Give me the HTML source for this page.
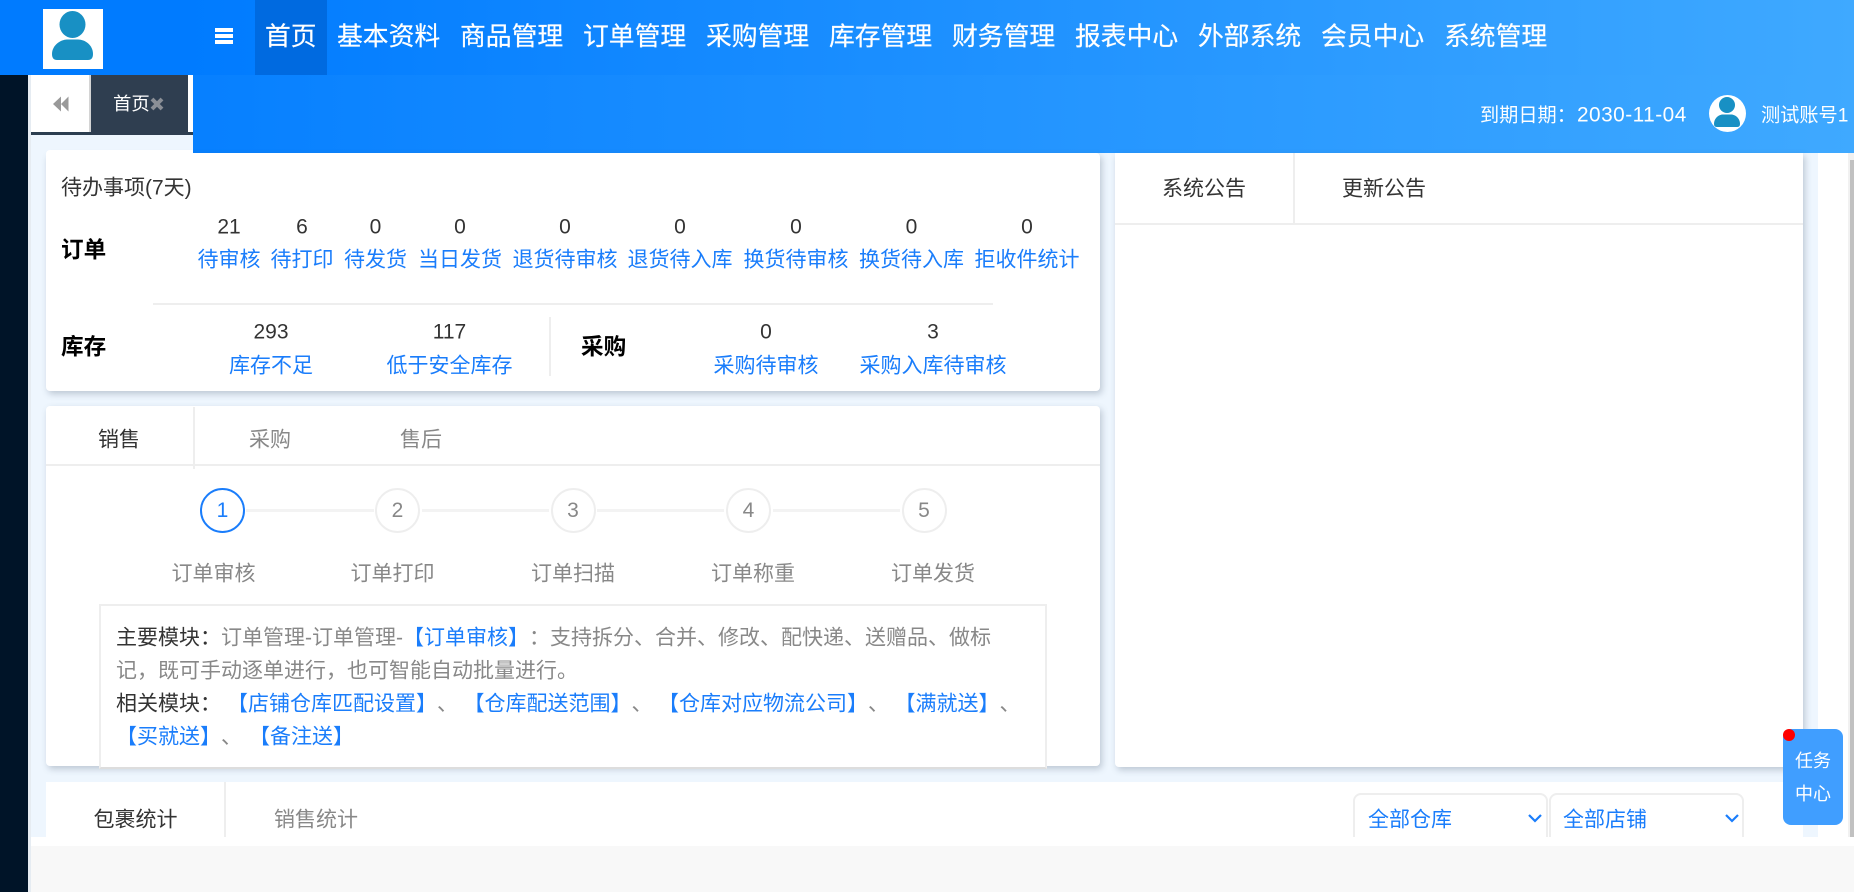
<!DOCTYPE html>
<html lang="zh">
<head>
<meta charset="utf-8">
<title>首页</title>
<style>
html,body{margin:0;padding:0;width:1854px;height:892px;overflow:hidden;background:#fff;}
body{position:relative;font-family:"Liberation Sans","Noto Sans CJK SC",sans-serif;font-size:21px;color:#333;text-spacing-trim:space-all;}
div,span,svg{box-sizing:border-box;}
.a{position:absolute;}
.t{position:absolute;transform:translate(-50%,-50%);white-space:nowrap;line-height:1;}
.l{position:absolute;transform:translateY(-50%);white-space:nowrap;line-height:1;}
.blue{color:#1a7dfb;}
.gray{color:#888;}
.b{font-weight:700;font-size:22.6px;color:#000;}
.card{position:absolute;background:#fff;border-radius:4px;box-shadow:2px 3px 7px rgba(60,80,100,.28);}
.m{position:absolute;top:37.500px;transform:translateY(-50%);font-size:25.800px;line-height:1;color:#fff;white-space:nowrap;-webkit-text-stroke:.2px #fff;}
.c{position:absolute;width:45px;height:45px;border-radius:50%;border:2px solid #eee;top:488px;text-align:center;line-height:42px;color:#888;background:#fff;}
.ln{position:absolute;height:3px;top:509px;background:#f3f3f3;}
.s{position:absolute;top:793px;height:44px;width:195px;background:#fff;border:2px solid #eee;border-bottom:0;border-radius:8px 8px 0 0;}
.ln2{position:absolute;left:116px;transform:translateY(-50%);white-space:nowrap;line-height:1;color:#888;}
</style>
</head>
<body>
<!-- sidebar + backgrounds -->
<div class="a" style="left:0;top:75px;width:28px;height:817px;background:#001428;"></div>
<div class="a" style="left:28px;top:75px;width:3px;height:817px;background:#e6ecf2;"></div>
<div class="a" style="left:31px;top:135px;width:1787px;height:702px;background:#eef6fe;"></div>
<div class="a" style="left:31px;top:846px;width:1823px;height:46px;background:#f8f8f8;"></div>
<!-- right strip -->
<div class="a" style="left:1818px;top:153px;width:36px;height:693px;background:#fff;"></div>
<div class="a" style="left:1848px;top:153px;width:6px;height:684px;background:#f1f1f1;"></div>
<div class="a" style="left:1850px;top:160px;width:4px;height:677px;background:#c1c1c1;"></div>

<!-- header -->
<div class="a" style="left:0;top:0;width:1854px;height:75px;background:linear-gradient(90deg,#007bff 0,#007bff 10%,#3fa9ff 100%);"></div>
<div class="a" style="left:193px;top:75px;width:1661px;height:78px;background:linear-gradient(90deg,#007bff 0,#3fa9ff 100%);background-size:1854px 100%;background-position:-193px 0;"></div>
<div class="a" style="left:255px;top:0;width:72px;height:75px;background:#006ae0;"></div>
<!-- logo -->
<div class="a" style="left:43px;top:9px;width:60px;height:60px;background:#fff;">
<svg width="60" height="60" viewBox="0 0 60 60"><ellipse cx="29.500" cy="15.500" rx="13" ry="13.500" fill="#1890c4"/><path d="M14 51Q9 51 9 45C9 36 18 30.500 24 30.500H35C42 30.500 50 36 50 45Q50 51 45 51Z" fill="#1890c4"/></svg>
</div>
<!-- hamburger -->
<div class="a" style="left:215px;top:28px;width:18px;height:4px;background:#fff;"></div>
<div class="a" style="left:215px;top:34px;width:18px;height:4px;background:#fff;"></div>
<div class="a" style="left:215px;top:40px;width:18px;height:3.500px;background:#fff;"></div>
<!-- menu -->
<div class="m" style="left:265px;">首页</div>
<div class="m" style="left:337px;">基本资料</div>
<div class="m" style="left:460px;">商品管理</div>
<div class="m" style="left:583px;">订单管理</div>
<div class="m" style="left:706px;">采购管理</div>
<div class="m" style="left:829px;">库存管理</div>
<div class="m" style="left:952px;">财务管理</div>
<div class="m" style="left:1075px;">报表中心</div>
<div class="m" style="left:1198px;">外部系统</div>
<div class="m" style="left:1321px;">会员中心</div>
<div class="m" style="left:1444px;">系统管理</div>
<!-- header right -->
<div class="l" style="left:1480px;top:115.500px;font-size:19.200px;color:#fff;">到期日期：<span style="font-size:20.800px;letter-spacing:.5px;margin-left:1px;">2030-11-04</span></div>
<div class="a" style="left:1709px;top:95px;width:37px;height:37px;border-radius:50%;background:#fff;">
<svg width="37" height="37" viewBox="0 0 37 37"><circle cx="18" cy="10" r="8" fill="#1890c4"/><path d="M8 32Q5 32 5 29C5 23 10 19.500 14 19.500H22C26 19.500 31 23 31 29Q31 32 28 32Z" fill="#1890c4"/></svg>
</div>
<div class="l" style="left:1761px;top:115.500px;font-size:19.200px;color:#fff;">测试账号1</div>

<!-- tab row -->
<div class="a" style="left:31px;top:75px;width:162px;height:60px;background:#fff;"></div>
<div class="a" style="left:31px;top:132px;width:162px;height:3px;background:#2c3e50;"></div>
<div class="a" style="left:89px;top:75px;width:2px;height:57px;background:#d4d4d4;"></div>
<div class="a" style="left:91px;top:75px;width:97px;height:60px;background:#2f3e50;"></div>
<svg class="a" style="left:52px;top:95px;" width="18" height="18" viewBox="0 0 18 18"><path d="M1 9L9 1.500V16.500ZM9 9L16.500 1.500V16.500Z" fill="#999"/></svg>
<div class="l" style="left:113px;top:104px;font-size:18.400px;color:#fff;">首页</div>
<svg class="a" style="left:150px;top:97px;" width="14" height="14" viewBox="0 0 14 14"><path d="M2 2L12 12M12 2L2 12" stroke="#8b8f96" stroke-width="4"/></svg>

<!-- card 1 -->
<div class="card" style="left:46px;top:153px;width:1054px;height:238px;"></div>
<div class="a" style="left:46px;top:150px;width:147px;height:6px;background:#fff;border-radius:4px 0 0 0;"></div>
<div class="l" style="left:61px;top:188px;">待办事项(7天)</div>
<div class="l b" style="left:61px;top:251px;">订单</div>
<div class="t" style="left:229px;top:227px;">21</div><div class="t blue" style="left:229px;top:260px;">待审核</div>
<div class="t" style="left:302px;top:227px;">6</div><div class="t blue" style="left:302px;top:260px;">待打印</div>
<div class="t" style="left:375.500px;top:227px;">0</div><div class="t blue" style="left:375.500px;top:260px;">待发货</div>
<div class="t" style="left:460px;top:227px;">0</div><div class="t blue" style="left:460px;top:260px;">当日发货</div>
<div class="t" style="left:565px;top:227px;">0</div><div class="t blue" style="left:565px;top:260px;">退货待审核</div>
<div class="t" style="left:680px;top:227px;">0</div><div class="t blue" style="left:680px;top:260px;">退货待入库</div>
<div class="t" style="left:796px;top:227px;">0</div><div class="t blue" style="left:796px;top:260px;">换货待审核</div>
<div class="t" style="left:911.500px;top:227px;">0</div><div class="t blue" style="left:911.500px;top:260px;">换货待入库</div>
<div class="t" style="left:1027px;top:227px;">0</div><div class="t blue" style="left:1027px;top:260px;">拒收件统计</div>
<div class="a" style="left:153px;top:303px;width:840px;height:2px;background:#eee;"></div>
<div class="l b" style="left:61px;top:348px;">库存</div>
<div class="t" style="left:271px;top:332px;">293</div><div class="t blue" style="left:271px;top:366px;">库存不足</div>
<div class="t" style="left:449.500px;top:332px;">117</div><div class="t blue" style="left:449.500px;top:366px;">低于安全库存</div>
<div class="a" style="left:549px;top:317px;width:2px;height:59px;background:#eee;"></div>
<div class="l b" style="left:581px;top:348px;">采购</div>
<div class="t" style="left:766px;top:332px;">0</div><div class="t blue" style="left:766px;top:366px;">采购待审核</div>
<div class="t" style="left:933px;top:332px;">3</div><div class="t blue" style="left:933px;top:366px;">采购入库待审核</div>

<!-- card 2 -->
<div class="card" style="left:46px;top:406px;width:1054px;height:360px;"></div>
<div class="a" style="left:46px;top:464px;width:1054px;height:2px;background:#eee;"></div>
<div class="a" style="left:193px;top:407px;width:2px;height:62px;background:#eee;"></div>
<div class="t" style="left:119px;top:440px;">销售</div>
<div class="t gray" style="left:270px;top:440px;">采购</div>
<div class="t gray" style="left:421px;top:440px;">售后</div>
<div class="ln" style="left:246px;width:128px;"></div>
<div class="ln" style="left:422px;width:127px;"></div>
<div class="ln" style="left:597px;width:127px;"></div>
<div class="ln" style="left:773px;width:127px;"></div>
<div class="c" style="left:200px;border-color:#1a7dfb;color:#1a7dfb;">1</div>
<div class="c" style="left:375px;">2</div>
<div class="c" style="left:550.500px;">3</div>
<div class="c" style="left:726px;">4</div>
<div class="c" style="left:901.500px;">5</div>
<div class="t gray" style="left:213.500px;top:574px;">订单审核</div>
<div class="t gray" style="left:392.500px;top:574px;">订单打印</div>
<div class="t gray" style="left:573px;top:574px;">订单扫描</div>
<div class="t gray" style="left:753px;top:574px;">订单称重</div>
<div class="t gray" style="left:933px;top:574px;">订单发货</div>
<div class="a" style="left:99px;top:604px;width:948px;height:165px;border:2px solid #eee;background:#fff;border-bottom-color:#ddd;"></div>
<div class="ln2" style="top:638px;"><span style="color:#333;">主要模块：</span>订单管理-订单管理-<span class="blue">【订单审核】</span>：支持拆分、合并、修改、配快递、送赠品、做标</div>
<div class="ln2" style="top:671px;">记，既可手动逐单进行，也可智能自动批量进行。</div>
<div class="ln2" style="top:704px;"><span style="color:#333;">相关模块：</span><span class="blue" style="margin-left:6px;">【店铺仓库匹配设置】</span>、<span class="blue" style="margin-left:5.500px;">【仓库配送范围】</span>、<span class="blue" style="margin-left:5.500px;">【仓库对应物流公司】</span>、<span class="blue" style="margin-left:5.500px;">【满就送】</span>、</div>
<div class="ln2" style="top:737px;"><span class="blue">【买就送】</span>、<span class="blue" style="margin-left:7px;">【备注送】</span></div>

<!-- card 3 -->
<div class="card" style="left:1115px;top:153px;width:688px;height:614px;border-radius:0 0 4px 4px;"></div>
<div class="a" style="left:1115px;top:223px;width:688px;height:2px;background:#eee;"></div>
<div class="a" style="left:1293px;top:153px;width:2px;height:72px;background:#eee;"></div>
<div class="t" style="left:1204px;top:188.500px;">系统公告</div>
<div class="t" style="left:1384px;top:188.500px;">更新公告</div>

<!-- card 4 -->
<div class="a" style="left:46px;top:782px;width:1757px;height:55px;background:#fff;"></div>
<div class="a" style="left:224px;top:782px;width:2px;height:55px;background:#eee;"></div>
<div class="t" style="left:135.500px;top:820px;">包裹统计</div>
<div class="t gray" style="left:316px;top:820px;">销售统计</div>
<div class="s" style="left:1353px;"></div>
<div class="s" style="left:1549px;"></div>
<div class="l blue" style="left:1368px;top:820px;">全部仓库</div>
<div class="l blue" style="left:1563px;top:820px;">全部店铺</div>
<svg class="a" style="left:1528px;top:812px;" width="14" height="12" viewBox="0 0 14 12"><path d="M1 3L7 9L13 3" fill="none" stroke="#1a7dfb" stroke-width="2.200"/></svg>
<svg class="a" style="left:1725px;top:812px;" width="14" height="12" viewBox="0 0 14 12"><path d="M1 3L7 9L13 3" fill="none" stroke="#1a7dfb" stroke-width="2.200"/></svg>

<!-- task center -->
<div class="a" style="left:1783px;top:729px;width:60px;height:96px;background:#409eff;border-radius:8px;"></div>
<div class="a" style="left:1783px;top:729px;width:12px;height:12px;background:#f00;border-radius:50%;"></div>
<div class="t" style="left:1813px;top:761px;font-size:18px;color:#fff;">任务</div>
<div class="t" style="left:1813px;top:794px;font-size:18px;color:#fff;">中心</div>
</body>
</html>
